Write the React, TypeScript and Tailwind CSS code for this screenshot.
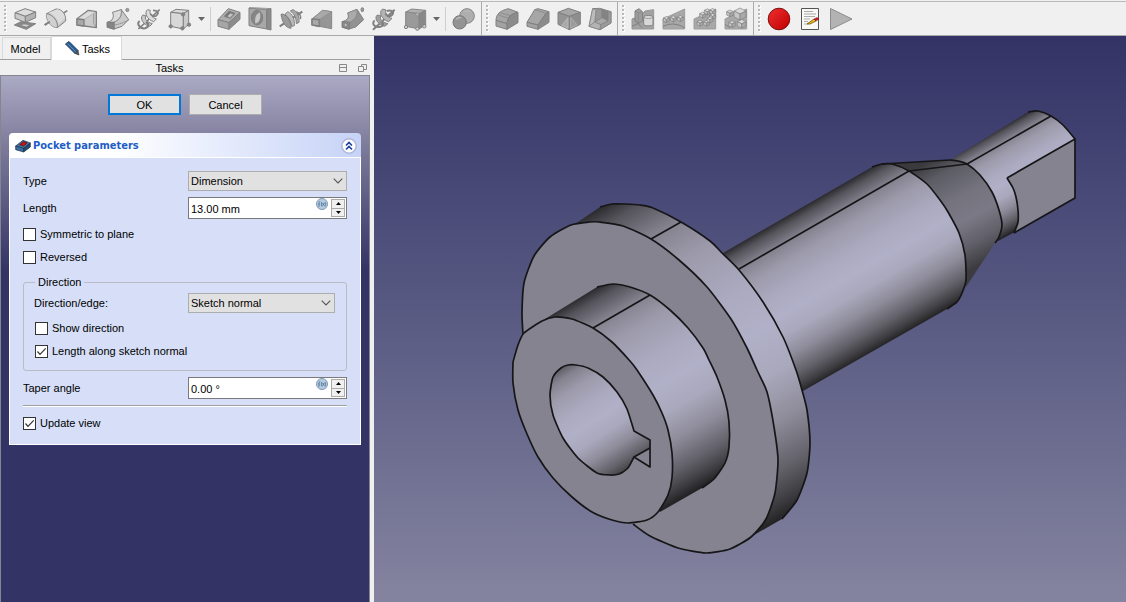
import type { ReactNode } from "react";

type Shape = { d: string; f?: string; s?: string; w?: number };
type IconDef = { name: string; shapes: Shape[] };

const LIGHT = "#dcdcdc";
const SOFT = "#cacaca";
const MID = "#b2b2b2";
const DIM = "#9a9a9a";
const DARK = "#858585";
const EDGE = "#808080";

const additive: IconDef[] = [
  {
    name: "Pad",
    shapes: [
      { d: "M4 54L24 44L68 50L40 67Z", f: "#888888" },
      { d: "M22 55L32 51L52 53L40 60Z", f: "#d4d4d4", w: 2 },
      { d: "M6 17L36 5L68 15L37 28Z", f: LIGHT },
      { d: "M6 17L37 28V46L6 34Z", f: SOFT },
      { d: "M37 28L68 15V32L37 46Z", f: MID },
    ],
  },
  {
    name: "Revolution",
    shapes: [
      { d: "M2 54L70 11", w: 5 },
      { d: "M8 20L36 6C54 6 66 20 65 42L40 62C42 42 28 24 8 20Z", f: SOFT },
      { d: "M14 17L40 7C54 10 62 22 63 34L44 52C40 34 30 22 14 17Z", f: LIGHT, s: "none" },
      { d: "M8 20C2 34 20 64 40 62C42 42 28 24 8 20Z", f: "#d0d0d0", w: 2 },
      { d: "M2 54L18 44", w: 5 },
    ],
  },
  {
    name: "Additive loft",
    shapes: [
      { d: "M6 35L40 10L64 14V62L28 57L6 54Z", f: SOFT, w: 4 },
      { d: "M40 12L62 15L28 37L8 35Z", f: LIGHT, w: 1 },
      { d: "M6 36L27 38V57L6 54Z", f: "#a8a8a8", w: 4 },
      { d: "M56 20V50L64 60", w: 2 },
    ],
  },
  {
    name: "Additive pipe",
    shapes: [
      { d: "M20 16L46 8L68 38L48 58L24 66L4 60V46C20 42 26 32 20 16Z", f: SOFT },
      { d: "M20 16L46 8C48 26 42 38 24 46L4 46C20 42 26 32 20 16Z", f: LIGHT, w: 2 },
      { d: "M46 8C48 24 42 38 24 46V66M26 54C46 50 60 44 68 38", w: 2 },
      { d: "M4 46L24 46L24 66L4 60Z", f: DARK, w: 4 },
      { d: "M59 9A5 5 0 1 0 69 9A5 5 0 1 0 59 9", f: DIM, w: 2 },
    ],
  },
  {
    name: "Additive helix",
    shapes: [
      { d: "M4 66L68 8", w: 5 },
      { d: "M32 8C20 16 30 38 50 44L58 36C44 32 36 18 40 10Z", f: LIGHT },
      { d: "M18 24C6 34 20 54 38 58L46 50C30 46 22 36 26 26Z", f: SOFT },
      { d: "M48 10C62 10 68 18 58 26C50 30 42 24 40 20", f: "none", w: 5 },
      { d: "M8 42C-2 50 8 66 24 64C38 60 36 48 26 46", f: "none", w: 6 },
    ],
  },
  {
    name: "Additive box",
    shapes: [
      { d: "M8 16L24 7L62 10L46 20Z", f: LIGHT },
      { d: "M8 16L46 20V66L8 58Z", f: "#d8d8d8" },
      { d: "M46 20L62 10V52L46 66Z", f: SOFT },
      { d: "M3 58A5 5 0 1 0 13 58A5 5 0 1 0 3 58", f: DARK, w: 3 },
      { d: "M38 64A5 5 0 1 0 48 64A5 5 0 1 0 38 64", f: DARK, w: 3 },
      { d: "M58 53A5 5 0 1 0 68 53A5 5 0 1 0 58 53", f: DARK, w: 3 },
      { d: "M40 22A5 5 0 1 0 50 22A5 5 0 1 0 40 22", f: DARK, w: 3 },
    ],
  },
];

const subtractive: IconDef[] = [
  {
    name: "Pocket",
    shapes: [
      { d: "M3 38L34 5L69 16L36 47Z", f: "#adadad" },
      { d: "M3 38L36 47V67L3 58Z", f: "#a6a6a6" },
      { d: "M36 47L69 16V37L36 67Z", f: "#8c8c8c" },
      { d: "M22 28L36 13L54 19L40 34Z", f: "#747474" },
      { d: "M31 28L40 19L49 22L39 32Z", f: "#c8c8c8", w: 1 },
    ],
  },
  {
    name: "Hole",
    shapes: [
      { d: "M3 3L56 8V66L3 56Z", f: "#a8a8a8" },
      { d: "M3 3L20 2L69 5L56 8Z", f: "#bcbcbc", w: 2 },
      { d: "M56 8L69 5V69L56 66Z", f: "#8a8a8a" },
      { d: "M10 32A17 22 0 1 0 44 32A17 22 0 1 0 10 32", f: "#858585" },
      { d: "M22 50C34 48 40 36 36 16C22 20 18 38 22 50Z", f: "#c8c8c8", w: 1 },
    ],
  },
  {
    name: "Groove",
    shapes: [
      { d: "M2 58L70 14", w: 6 },
      { d: "M42 8C54 12 62 30 60 46L52 50C52 34 46 20 34 12Z", f: "#a8a8a8" },
      { d: "M26 14C40 20 48 38 46 56L38 58C36 42 28 30 18 22Z", f: "#bbbbbb" },
      { d: "M6 22C18 16 38 42 36 64C20 62 10 48 6 22Z", f: DIM },
      { d: "M52 14C62 18 66 28 64 36", w: 5 },
    ],
  },
  {
    name: "Subtractive loft",
    shapes: [
      { d: "M6 36L38 10L65 14V65L28 58L6 54Z", f: "#969696", s: "#888888" },
      { d: "M38 10L65 14L28 38L6 36Z", f: "#a9a9a9", s: "#888888", w: 2 },
      { d: "M6 36L28 38V58L6 54Z", f: "#a8a8a8", w: 5 },
    ],
  },
  {
    name: "Subtractive pipe",
    shapes: [
      { d: "M20 18L48 7L68 38L44 60L24 66L4 60V44C20 40 26 32 20 18Z", f: "#929292" },
      { d: "M20 18L48 7C50 26 42 38 26 46L4 44C20 40 26 32 20 18Z", f: "#aaaaaa", w: 2 },
      { d: "M4 44L26 46L24 66L4 60Z", f: "#8b8b8b", w: 4 },
      { d: "M10 50H18V58H10Z", f: "#c8c8c8", w: 2 },
      { d: "M60 8A4 6 0 1 0 68 8A4 6 0 1 0 60 8", f: DIM, w: 3 },
    ],
  },
  {
    name: "Subtractive helix",
    shapes: [
      { d: "M3 68L68 8", w: 6 },
      { d: "M32 6C18 16 30 38 50 44L60 34C46 32 38 18 42 9Z", f: "#b4b4b4" },
      { d: "M16 24C4 34 20 54 38 58L48 50C30 46 22 36 26 26Z", f: "#9f9f9f" },
      { d: "M44 12C62 6 68 18 58 26C50 30 44 26 40 20", f: "none", w: 6 },
      { d: "M8 40C-2 50 8 62 22 60C36 58 36 48 26 46", f: "none", w: 6 },
    ],
  },
  {
    name: "Subtractive box",
    shapes: [
      { d: "M8 15L26 6L68 10L48 20Z", f: "#b0b0b0", s: "#888888" },
      { d: "M8 15L48 20V66L8 58Z", f: "#9a9a9a", s: "#888888" },
      { d: "M48 20L68 10V54L48 66Z", f: "#888888", s: "#888888" },
      { d: "M4 60A5 5 0 1 0 14 60A5 5 0 1 0 4 60", f: "#d0d0d0", w: 3 },
      { d: "M38 65A5 5 0 1 0 48 65A5 5 0 1 0 38 65", f: "#d0d0d0", w: 3 },
      { d: "M59 58A5 5 0 1 0 69 58A5 5 0 1 0 59 58", f: "#d0d0d0", w: 3 },
      { d: "M38 22A5 5 0 1 0 48 22A5 5 0 1 0 38 22", f: "#b8b8b8", w: 2 },
    ],
  },
];

const booleanIcon: IconDef = {
  name: "Boolean operation",
  shapes: [
    { d: "M23 27A22 22 0 1 0 67 27A22 22 0 1 0 23 27", f: "#aeaeae", s: "#858585", w: 3 },
    { d: "M3 46A20 20 0 1 0 43 46A20 20 0 1 0 3 46", f: "#939393", s: "#777777", w: 3 },
    { d: "M12 38Q18 30 28 32M38 14Q46 9 54 13", s: "#b8b8b8", w: 4 },
  ],
};

const dressup: IconDef[] = [
  {
    name: "Fillet",
    shapes: [
      { d: "M3 40C4 22 12 12 40 5L69 16C48 20 38 30 36 50Z", f: "#a6a6a6" },
      { d: "M3 40L36 50V67L3 57Z", f: "#a2a2a2" },
      { d: "M36 50C38 30 48 20 69 16V47L36 67Z", f: "#8b8b8b" },
      { d: "M10 24L42 34M14 17L48 26", w: 2 },
    ],
  },
  {
    name: "Chamfer",
    shapes: [
      { d: "M3 46L26 8L36 5L69 14L60 19L36 54Z", f: "#a6a6a6" },
      { d: "M3 46L36 54V67L3 58Z", f: "#a2a2a2" },
      { d: "M36 54L60 19L69 14V46L36 67Z", f: "#8b8b8b" },
      { d: "M26 8L60 19", w: 2 },
    ],
  },
  {
    name: "Draft",
    shapes: [
      { d: "M3 16L34 4L70 16L37 28Z", f: "#a6a6a6" },
      { d: "M3 16L37 28V68L3 52Z", f: "#949494" },
      { d: "M37 28L70 16V52L37 68Z", f: "#8e8e8e" },
      { d: "M33 32L14 55L33 64Z", f: "#a8a8a8", s: "#c4c4c4", w: 2 },
      { d: "M41 32L60 53L41 64Z", f: "#9a9a9a", s: "#bcbcbc", w: 2 },
    ],
  },
  {
    name: "Thickness",
    shapes: [
      { d: "M14 5L34 4L69 14V48L36 68L3 58Z", f: "#b0b0b0" },
      { d: "M24 9L42 6V32L20 45Z", f: "#989898", w: 2 },
      { d: "M42 6L60 14V42L42 32Z", f: "#848484", w: 2 },
      { d: "M20 45L42 32L60 42L38 53Z", f: "#a8a8a8", w: 2 },
      { d: "M14 5L24 9L20 45L3 58Z", f: "#bcbcbc", w: 2 },
      { d: "M3 58L20 45L38 53L36 68Z", f: "#b4b4b4", w: 2 },
      { d: "M60 15L69 14V48L36 68L38 53L60 42Z", f: "#9a9a9a", w: 2 },
    ],
  },
];

const cubeAt = (x: number, y: number, r: number): Shape[] => [
  { d: `M${x} ${y}l${r} ${-r / 2}l${r} ${r / 2}l${-r} ${r / 2}Z`, f: "#d8d8d8", w: 2 },
  { d: `M${x} ${y}l${r} ${r / 2}v${r}l${-r} ${-r / 2}Z`, f: "#c6c6c6", w: 2 },
  { d: `M${x + r} ${y + r / 2}l${r} ${-r / 2}v${r}l${-r} ${r / 2}Z`, f: "#a9a9a9", w: 2 },
];
const base: Shape = { d: "M3 36L68 6V66H3Z", f: "#a8a8a8", s: "#9c9c9c", w: 3 };

const transform: IconDef[] = [
  {
    name: "Mirrored",
    shapes: [
      { d: "M3 36Q10 30 20 36L42 12L68 8V66H3Z", f: "#a2a2a2", s: "#969696", w: 3 },
      { d: "M12 12L24 5L34 14V42L22 50L12 42Z", f: "#9d9d9d" },
      { d: "M12 12L22 18V50M22 18L34 14", w: 2 },
      { d: "M38 30C38 24 66 24 66 30V52C66 58 38 58 38 52Z", f: "#d8d8d8", w: 3 },
      { d: "M38 30C38 36 66 36 66 30", w: 2 },
      { d: "M3 58L20 50L34 62", w: 3 },
    ],
  },
  { name: "Linear pattern", shapes: [base, ...cubeAt(4, 33, 9), ...cubeAt(25, 31, 9), ...cubeAt(46, 30, 9), { d: "M3 58Q34 42 68 62", w: 3 }] },
  { name: "Polar pattern", shapes: [base, ...cubeAt(20, 20, 9), ...cubeAt(34, 10, 9), ...cubeAt(50, 9, 9), ...cubeAt(50, 24, 9), ...cubeAt(12, 44, 9), ...cubeAt(32, 44, 9), ...cubeAt(42, 34, 9)] },
  { name: "MultiTransform", shapes: [base, ...cubeAt(8, 14, 10), ...cubeAt(30, 12, 18), ...cubeAt(14, 46, 10), ...cubeAt(40, 44, 13), { d: "M3 52L18 62", w: 3 }] },
];

function Icon({ def }: { def: IconDef }) {
  return (
    <svg viewBox="0 0 72 72" className="size-6" aria-hidden="true">
      {def.shapes.map((p, i) => (
        <path key={i} d={p.d} fill={p.f ?? "none"} stroke={p.s ?? EDGE} strokeWidth={p.w ?? 3} strokeLinejoin="round" />
      ))}
    </svg>
  );
}

function ToolButton({ label, children }: { label: string; children: ReactNode }) {
  return (
    <button type="button" aria-label={label} className="flex size-6 shrink-0 items-center justify-center">
      {children}
    </button>
  );
}

function Tools({ defs }: { defs: IconDef[] }) {
  return (
    <div className="flex gap-[7px]">
      {defs.map((d) => (
        <ToolButton key={d.name} label={d.name}>
          <Icon def={d} />
        </ToolButton>
      ))}
    </div>
  );
}

function Handle() {
  return (
    <svg viewBox="0 0 3 28" className="h-7 w-[3px] shrink-0" aria-hidden="true">
      {[0, 4, 8, 12, 16, 20, 24].map((y) => (
        <g key={y}>
          <rect x="1" y={y + 1} width="2" height="2" fill="#fff" />
          <rect x="0" y={y} width="2" height="2" fill="#b9b9b9" />
        </g>
      ))}
    </svg>
  );
}

function MenuArrow({ label }: { label: string }) {
  return (
    <button type="button" aria-label={label} className="flex h-6 w-[18px] shrink-0 items-center justify-center">
      <svg viewBox="0 0 7 4" className="h-1 w-[7px]" aria-hidden="true">
        <path d="M0 0H7L3.5 4Z" fill="#666" />
      </svg>
    </button>
  );
}

function Toolbar() {
  return (
    <header className="flex h-9 items-stretch border-b border-[#a9a9a9] bg-[#f0f0f0] pt-0.5 shadow-[inset_0_1px_0_#f0f0f0,inset_0_2px_0_#b9b9b9]">
      <div className="flex items-center border-r border-[#ababab] pr-[5px] pl-1">
        <Handle />
        <div className="ml-1.5 flex items-center">
          <Tools defs={additive} />
          <MenuArrow label="More additive primitives" />
          <div className="mr-1.5 h-6 w-px bg-[#cfcfcf]" />
          <Tools defs={subtractive} />
          <MenuArrow label="More subtractive primitives" />
          <div className="mr-1.5 h-6 w-px bg-[#cfcfcf]" />
          <Tools defs={[booleanIcon]} />
        </div>
      </div>
      <div className="flex items-center gap-1.5 border-r border-[#ababab] pr-[5px] pl-1">
        <Handle />
        <Tools defs={dressup} />
      </div>
      <div className="flex items-center gap-1.5 border-r border-[#ababab] pr-[5px] pl-1">
        <Handle />
        <Tools defs={transform} />
      </div>
      <div className="flex items-center gap-1.5 px-1">
        <Handle />
        <div className="flex gap-[7px]">
          <ToolButton label="Record macro">
            <svg viewBox="0 0 24 24" className="size-6" aria-hidden="true">
              <defs>
                <linearGradient id="rec" x1="0" y1="0" x2="1" y2="1">
                  <stop offset="0" stopColor="#f03030" />
                  <stop offset="1" stopColor="#c00000" />
                </linearGradient>
              </defs>
              <circle cx="12" cy="12" r="10.8" fill="url(#rec)" stroke="#7e1010" />
            </svg>
          </ToolButton>
          <ToolButton label="Edit macros">
            <svg viewBox="0 0 24 24" className="size-6" aria-hidden="true">
              <path d="M3.500 1.500H20.500V22.500H3.500Z" fill="#f8f8f4" stroke="#555" />
              <path d="M6 4.500H15M6 7H18M6 9.500H17M6 12H12M6 14.500H10M6 17H9" stroke="#aaa" />
              <path d="M9 17L16 12L18 14L12 17Z" fill="#f0c020" stroke="#6b4a00" strokeWidth=".8" />
              <path d="M16 12L19 10.500L21 12L18 14Z" fill="#d42020" stroke="#701010" strokeWidth=".5" />
            </svg>
          </ToolButton>
          <ToolButton label="Execute macro">
            <svg viewBox="0 0 24 24" className="size-6" aria-hidden="true">
              <path d="M1.500 1.500L23 12L1.500 22.500Z" fill="#b3b3b3" stroke="#8c8c8c" />
            </svg>
          </ToolButton>
        </div>
      </div>
    </header>
  );
}

function Combo({ id, value }: { id: string; value: string }) {
  return (
    <div className="relative h-5">
      <select id={id} defaultValue={value} className="h-5 w-full appearance-none border border-[#adadad] bg-[#e1e1e1] pl-0.5 text-black">
        <option>{value}</option>
      </select>
      <svg viewBox="0 0 10 6" className="pointer-events-none absolute top-[7px] right-1 h-1.5 w-2.5" aria-hidden="true">
        <path d="M.7 .7L5 5L9.300 .7" fill="none" stroke="#555" strokeWidth="1.1" />
      </svg>
    </div>
  );
}

function Spin({ id, value }: { id: string; value: string }) {
  return (
    <div className="flex h-[22px] border border-[#7a7a7a] bg-white">
      <input id={id} defaultValue={value} className="min-w-0 flex-1 bg-transparent pt-px pl-0.5 outline-none" />
      <button type="button" aria-label="Formula editor" className="mr-[3px] size-3 shrink-0 rounded-full">
        <svg viewBox="0 0 12 12" className="size-3" aria-hidden="true">
          <circle cx="6" cy="6" r="5.500" fill="#b5cbe0" stroke="#8299b3" />
          <path d="M3 9V4.500Q3 3.500 4.200 3.500M2.300 6H4M5.800 4Q4.800 6 5.800 8.500M9 4Q10 6 9 8.500M6.500 5L8.300 7.800M8.300 5L6.500 7.800" fill="none" stroke="#587a9c" strokeWidth=".9" />
        </svg>
      </button>
      <div className="my-px mr-px flex w-[14px] shrink-0 flex-col">
        <button type="button" aria-label="Increase" className="flex flex-1 items-center justify-center border border-[#ababab] bg-[#f0f0f0]">
          <svg viewBox="0 0 5 3" className="h-[3px] w-[5px]" aria-hidden="true"><path d="M0 3L2.500 0L5 3Z" /></svg>
        </button>
        <button type="button" aria-label="Decrease" className="flex flex-1 items-center justify-center border border-t-0 border-[#ababab] bg-[#f0f0f0]">
          <svg viewBox="0 0 5 3" className="h-[3px] w-[5px]" aria-hidden="true"><path d="M0 0L2.500 3L5 0Z" /></svg>
        </button>
      </div>
    </div>
  );
}

function Check({ label, checked = false }: { label: string; checked?: boolean }) {
  return (
    <label className="flex h-[18px] w-fit items-center gap-1">
      <span className="grid size-[13px]">
        <input type="checkbox" defaultChecked={checked} className="peer col-start-1 row-start-1 size-[13px] appearance-none border border-[#333] bg-white" />
        <svg viewBox="0 0 13 13" className="pointer-events-none invisible col-start-1 row-start-1 size-[13px] peer-checked:visible" aria-hidden="true">
          <path d="M2.500 6.500L5 9.300L10.700 3.300" fill="none" stroke="#333" strokeWidth="1.200" />
        </svg>
      </span>
      <span>{label}</span>
    </label>
  );
}

function PocketPanel() {
  return (
    <section className="overflow-hidden rounded-t-[4px]">
      <h2 className="flex h-[25px] items-center border-b border-white bg-linear-to-r from-white from-30% to-[#c6d3f7] pt-px pr-1 pl-1.5 font-['DejaVu_Sans_Condensed','DejaVu_Sans',sans-serif] text-[11px] font-bold text-[#215dc6]">
        <svg viewBox="0 0 48 40" className="mr-0.5 h-4 w-4 shrink-0" aria-hidden="true">
          <path d="M2 20L24 3L46 11L26 27Z" fill="#4879a8" stroke="#142c44" strokeWidth="2" />
          <path d="M2 20L26 27V38L2 31Z" fill="#3d6f9e" stroke="#142c44" strokeWidth="2" />
          <path d="M26 27L46 11V23L26 38Z" fill="#234a70" stroke="#142c44" strokeWidth="2" />
          <path d="M14 16L26 7L36 11L26 20Z" fill="#d01515" stroke="#500" strokeWidth="2" />
        </svg>
        <span className="flex-1">Pocket parameters</span>
        <button type="button" aria-label="Collapse" className="size-4 shrink-0">
          <svg viewBox="0 0 16 16" className="size-4" aria-hidden="true">
            <circle cx="8" cy="8" r="7.200" fill="#fff" stroke="#b0b8d8" strokeWidth="1.500" />
            <path d="M5 7.500L8 4.500L11 7.500M5 11.500L8 8.500L11 11.500" fill="none" stroke="#1a3f9c" strokeWidth="1.600" />
          </svg>
        </button>
      </h2>
      <div className="border border-t-0 border-white bg-[#d6dff7] px-[13px] pt-[13px] pb-3">
        <div className="grid grid-cols-[165px_minmax(0,1fr)] items-center gap-y-1.5">
          <label htmlFor="type">Type</label>
          <Combo id="type" value="Dimension" />
          <label htmlFor="length">Length</label>
          <Spin id="length" value="13.00 mm" />
        </div>
        <div className="mt-1.5 flex flex-col gap-[5px]">
          <Check label="Symmetric to plane" />
          <Check label="Reversed" />
        </div>
        <fieldset className="mt-[9px] rounded-[3px] border border-[#b9bcc4] pr-[11px] pb-2.5 pl-2.5">
          <legend className="ml-px h-3.5 px-[3px] leading-[14px]">Direction</legend>
          <div className="mt-1 grid grid-cols-[154px_minmax(0,1fr)] items-center">
            <label htmlFor="edge">Direction/edge:</label>
            <Combo id="edge" value="Sketch normal" />
          </div>
          <div className="mt-1.5 flex flex-col gap-[5px] pl-px">
            <Check label="Show direction" />
            <Check label="Length along sketch normal" checked />
          </div>
        </fieldset>
        <div className="mt-1.5 grid grid-cols-[165px_minmax(0,1fr)] items-center">
          <label htmlFor="taper">Taper angle</label>
          <Spin id="taper" value="0.00 °" />
        </div>
        <hr className="mt-1.5 mb-[7px] h-0.5 border-t border-b border-t-[#a0a0a0] border-b-white" />
        <Check label="Update view" checked />
      </div>
    </section>
  );
}

function Sidebar() {
  return (
    <aside className="flex w-[370px] shrink-0 flex-col">
      <div className="flex h-6 items-end border-b border-[#a0a0a0] pl-0.5">
        <button type="button" className="h-[22px] w-[49px] border border-b-0 border-[#d9d9d9] pr-0.5">Model</button>
        <button type="button" className="-mb-px flex h-6 w-[71px] items-center gap-0.5 border border-b-0 border-[#d9d9d9] bg-white pl-3">
          <svg viewBox="0 0 16 16" className="size-4" aria-hidden="true">
            <path d="M1.500 3L5 .5L14 9.500L11 12.500Z" fill="#2c5c90" stroke="#1c4068" />
            <path d="M3.500 2.500L12 11" stroke="#5d8fc0" />
            <path d="M14 9.500L15 14L11 12.500Z" fill="#555" stroke="#333" strokeWidth=".6" />
          </svg>
          Tasks
        </button>
      </div>
      <div className="flex h-[15px] items-center pr-[3px]">
        <h1 className="flex-1 text-center">Tasks</h1>
        <div className="flex gap-2.5">
          <button type="button" aria-label="Minimize">
            <svg viewBox="0 0 9 9" className="size-[9px]" aria-hidden="true"><path d="M.5 1.500H7.500V8.500H.5ZM.5 4.500H7.500" fill="none" stroke="#888" /></svg>
          </button>
          <button type="button" aria-label="Float">
            <svg viewBox="0 0 9 9" className="size-[9px]" aria-hidden="true"><path d="M3.500 3V1.500H8.500V6.500H6M.5 3.500H5.500V8.500H.5Z" fill="none" stroke="#888" /></svg>
          </button>
        </div>
      </div>
      <div className="flex-1 border border-b-0 border-[#858591] bg-[#333366] bg-[linear-gradient(#abaac4,#7d7b9a_70px,#333366_195px)] px-2 pt-[18px]">
        <div className="mb-[18px] flex justify-center gap-2">
          <button type="button" className="h-[21px] w-[73px] border-2 border-[#0078d7] bg-[#e1e1e1]">OK</button>
          <button type="button" className="h-[21px] w-[73px] border border-[#adadad] bg-[#e1e1e1]">Cancel</button>
        </div>
        <PocketPanel />
      </div>
    </aside>
  );
}

type Point = [number, number];

const FACE = "#858390";

const tipArc: Point[] = [[1028, 112], [1038, 111], [1051, 116], [1063, 125], [1075, 139]];
const flatArc: Point[] = [[1007, 178], [1013, 188], [1016, 197], [1018, 210], [1018, 222], [1014, 233]];
const coneArc: Point[] = [[950, 160], [958, 161], [967, 164], [980, 175], [992, 192], [999, 210], [1002, 225], [999, 237], [995, 243]];
const shaftArc: Point[] = [[872, 167], [882, 164], [892, 164], [909, 171], [927, 184], [940, 200], [948, 212], [959, 233], [965, 255], [966, 280], [962, 293], [957, 302], [947, 309]];
const flangeBack: Point[] = [[600, 207], [612, 204], [625, 204], [640, 205], [653, 208], [681, 222], [710, 241], [722, 253], [739, 270], [763, 302], [783, 337], [796, 370], [802, 390], [807, 410], [810, 443], [807, 473], [797, 500], [782, 519]];
const flangeFront: Point[] = [[523, 335], [522, 313], [524, 283], [534, 256], [550, 237], [571, 225], [590, 222], [599, 222], [623, 226], [651, 239], [679, 260], [707, 287], [731, 319], [747, 348], [757, 370], [767, 392], [774, 427], [778, 460], [775, 493], [766, 519], [751, 537], [730, 549], [706, 553], [678, 548], [650, 536], [633, 524]];
const bossBack: Point[] = [[597, 287], [613, 284], [630, 287], [650, 295], [670, 310], [688, 328], [703, 348], [709, 360], [717, 377], [725, 400], [729, 422], [729, 447], [725, 463], [714, 479], [702, 488]];
const bossFront: Point[] = [[513, 362], [518, 345], [524, 333], [542, 321], [555, 317], [572, 319], [593, 328], [612, 342], [630, 361], [637, 370], [653, 395], [662, 413], [668, 430], [672, 453], [672, 478], [668, 495], [658, 512], [647, 520], [628, 523], [612, 520], [592, 512], [572, 497], [553, 478], [538, 457], [527, 434], [518, 410], [513, 383], [513, 362]];
const holeArc: Point[] = [[634, 457], [628, 468], [619, 474], [610, 475], [597, 473], [578, 458], [563, 438], [553, 415], [550, 395], [553, 377], [561, 368], [568, 365], [576, 365], [588, 368], [603, 377], [617, 392], [627, 409], [634, 431]];

/** Smooth path through the points; a move to the first one is included. */
function curve(points: Point[]): string {
  const parts = [`M${points[0][0]} ${points[0][1]}`];
  for (let i = 0; i < points.length - 1; i++) {
    const p0 = points[Math.max(i - 1, 0)];
    const p1 = points[i];
    const p2 = points[i + 1];
    const p3 = points[Math.min(i + 2, points.length - 1)];
    const k = 9;
    parts.push(
      `C${p1[0] + (p2[0] - p0[0]) / k} ${p1[1] + (p2[1] - p0[1]) / k} ${p2[0] - (p3[0] - p1[0]) / k} ${p2[1] - (p3[1] - p1[1]) / k} ${p2[0]} ${p2[1]}`,
    );
  }
  return parts.join("");
}

const STOPS: [number, string][] = [
  [0, "#2a2a2e"],
  [0.05, "#55545b"],
  [0.14, "#84828e"],
  [0.24, "#9c9aaa"],
  [0.4, "#abaac0"],
  [0.52, "#b0b0c8"],
  [0.64, "#a9a8bc"],
  [0.76, "#8f8d9b"],
  [0.88, "#63626a"],
  [0.96, "#3c3c40"],
  [1, "#242426"],
];

const CONE_STOPS: [number, string][] = [
  [0, "#3a3a3e"],
  [0.15, "#5c5c64"],
  [0.4, "#74737e"],
  [0.6, "#7a7985"],
  [0.8, "#62616a"],
  [1, "#3c3c40"],
];

function Shade({ id, from, to, stops = STOPS }: { id: string; from: Point; to: Point; stops?: [number, string][] }) {
  return (
    <linearGradient id={id} gradientUnits="userSpaceOnUse" x1={from[0]} y1={from[1]} x2={to[0]} y2={to[1]}>
      {stops.map(([o, c]) => (
        <stop key={o} offset={o} stopColor={c} />
      ))}
    </linearGradient>
  );
}

function Viewport() {
  return (
    <main className="min-w-0 flex-1 bg-linear-to-b from-[#333366] to-[#8584a0]">
      <svg viewBox="374 36 752 566" className="h-full w-full" role="img" aria-label="Flanged shaft model">
        <defs>
          <Shade id="flange" from={[600, 207]} to={[780, 519]} />
          <Shade id="boss" from={[597, 287]} to={[709, 482]} />
          <Shade id="shaft" from={[872, 167]} to={[952, 306]} />
          <Shade id="tip" from={[1028, 112]} to={[1076, 196]} />
          <Shade id="hole" from={[550, 364]} to={[624, 480]} />
          <Shade id="cone" from={[930, 161]} to={[985, 262]} stops={CONE_STOPS} />
        </defs>
        <g fill="none">
          <path fill="url(#tip)" d={`${curve(tipArc)}V198L1013 233L998 241L985 240L950 160Z`} />
          <path fill={FACE} d={`${curve(flatArc)}L1075 198V139Z`} />
          <path fill="url(#cone)" d={`${curve(coneArc)}L966 287L930 240L882 164Z`} />
          <path fill="url(#shaft)" d={`${curve(shaftArc)}L803 391L760 350L723 253Z`} />
        </g>
        <g stroke="#161618" strokeWidth="1.700" strokeLinejoin="round" fill="none">
          <path d={curve(tipArc)} />
          <path d={curve(flatArc)} />
          <path d="M1007 178L1075 139V198L1014 233M967 164L1051 116" />
          <path d={curve(coneArc)} />
          <path d={curve(shaftArc)} />
          <path d="M909 171L967 164M739 269L909 171M882 164L950 160" />
        </g>
        <path fill="url(#flange)" d={`${curve(flangeBack)}L754 535L650 400L575 224Z`} />
        <path fill={FACE} d={`${curve(flangeFront)}L580 400Z`} />
        <g stroke="#161618" strokeWidth="1.700" strokeLinejoin="round" fill="none">
          <path d={curve(flangeBack)} />
          <path d={curve(flangeFront)} />
          <path d="M651 239L681 222" />
        </g>
        <path fill="url(#boss)" d={`${curve(bossBack)}L660 512L600 420L545 319Z`} />
        <path fill={FACE} d={curve(bossFront)} />
        <path fill="url(#hole)" d={`${curve(holeArc)}L650 440V448Z`} />
        <g stroke="#161618" strokeWidth="1.700" strokeLinejoin="round" fill="none">
          <path d={curve(bossBack)} />
          <path d={curve(bossFront)} />
          <path d="M593 328L650 295" />
          <path d={`${curve(holeArc)}L650 440V467L634 457L650 448`} />
        </g>
      </svg>
    </main>
  );
}

export default function App() {
  return (
    <div className="flex h-screen flex-col bg-[#f0f0f0] font-['Liberation_Sans',sans-serif] text-[11px] leading-[14px] text-black">
      <Toolbar />
      <div className="flex min-h-0 flex-1">
        <Sidebar />
        <div className="w-1 shrink-0 bg-[#f0f0f0]" />
        <Viewport />
      </div>
    </div>
  );
}
